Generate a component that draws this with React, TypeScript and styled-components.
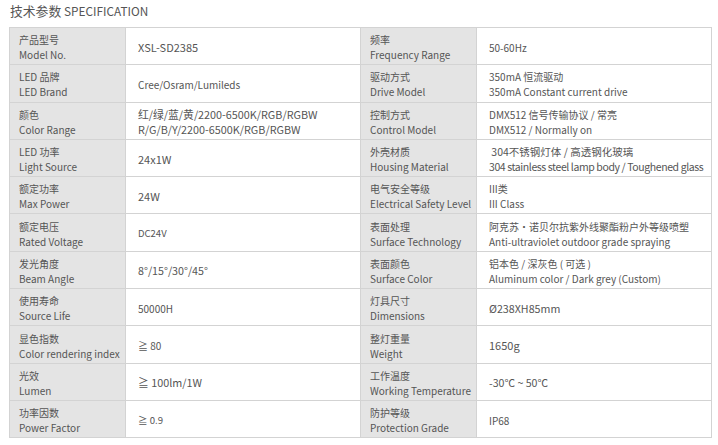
import React from "react";
import styled, { createGlobalStyle } from "styled-components";

type Spec = {
  zh: string;
  en: string;
  value: string[];
  size?: number;
};

const leftSpecs: Spec[] = [
  { zh: "产品型号", en: "Model No.", value: ["XSL-SD2385"], size: 11 },
  { zh: "LED 品牌", en: "LED Brand", value: ["Cree/Osram/Lumileds"] },
  {
    zh: "颜色",
    en: "Color Range",
    value: ["红/绿/蓝/黄/2200-6500K/RGB/RGBW", "R/G/B/Y/2200-6500K/RGB/RGBW"],
    size: 10.8,
  },
  { zh: "LED 功率", en: "Light Source", value: ["24x1W"], size: 11 },
  { zh: "额定功率", en: "Max Power", value: ["24W"], size: 11 },
  { zh: "额定电压", en: "Rated Voltage", value: ["DC24V"], size: 9.5 },
  { zh: "发光角度", en: "Beam Angle", value: ["8°/15°/30°/45°"], size: 10.7 },
  { zh: "使用寿命", en: "Source Life", value: ["50000H"] },
  { zh: "显色指数", en: "Color rendering index", value: ["≧ 80"] },
  { zh: "光效", en: "Lumen", value: ["≧ 100lm/1W"], size: 10.8 },
  { zh: "功率因数", en: "Power Factor", value: ["≧ 0.9"], size: 9.6 },
];

const rightSpecs: Spec[] = [
  { zh: "频率", en: "Frequency Range", value: ["50-60Hz"] },
  {
    zh: "驱动方式",
    en: "Drive Model",
    value: ["350mA 恒流驱动", "350mA Constant current drive"],
  },
  {
    zh: "控制方式",
    en: "Control Model",
    value: ["DMX512 信号传输协议 / 常亮", "DMX512 / Normally on"],
  },
  {
    zh: "外壳材质",
    en: "Housing Material",
    value: [" 304不锈钢灯体 / 高透钢化玻璃", "304 stainless steel lamp body / Toughened glass"],
    size: 10.5,
  },
  { zh: "电气安全等级", en: "Electrical Safety Level", value: ["III类", "III Class"] },
  {
    zh: "表面处理",
    en: "Surface Technology",
    value: ["阿克苏·诺贝尔抗紫外线聚酯粉户外等级喷塑", "Anti-ultraviolet outdoor grade spraying"],
  },
  {
    zh: "表面颜色",
    en: "Surface Color",
    value: ["铝本色 / 深灰色 ( 可选 )", "Aluminum color / Dark grey (Custom)"],
  },
  { zh: "灯具尺寸", en: "Dimensions", value: ["Ø238XH85mm"], size: 10.7 },
  { zh: "整灯重量", en: "Weight", value: ["1650g"], size: 11 },
  { zh: "工作温度", en: "Working Temperature", value: ["-30℃ ~ 50℃"], size: 10.6 },
  { zh: "防护等级", en: "Protection Grade", value: ["IP68"] },
];

const Values = ({ spec }: { spec: Spec }) => (
  <ValueCell size={spec.size}>
    {spec.value.map((v, j) => (
      <Line key={j} tight={v.length > 40}>
        {v}
      </Line>
    ))}
  </ValueCell>
);

const App = () => {
  return (
    <>
      <GlobalStyle />
      <Page>
        <Heading>
          技术参数 <HeadingEn>SPECIFICATION</HeadingEn>
        </Heading>
        <SpecTable>
          <colgroup>
            <col style={{ width: 116 }} />
            <col style={{ width: 235 }} />
            <col style={{ width: 116 }} />
            <col />
          </colgroup>
          <tbody>
            {leftSpecs.map((left, i) => {
              const right = rightSpecs[i];
              return (
                <tr key={i}>
                  <LabelCell>
                    {left.zh}
                    <br />
                    {left.en}
                  </LabelCell>
                  <Values spec={left} />
                  <LabelCell>
                    {right.zh}
                    <br />
                    {right.en}
                  </LabelCell>
                  <Values spec={right} />
                </tr>
              );
            })}
          </tbody>
        </SpecTable>
      </Page>
    </>
  );
};

export default App;

const GlobalStyle = createGlobalStyle`
  body {
    margin: 0;
    background: #ffffff;
    font-family: "Noto Sans CJK SC", "Noto Sans", sans-serif;
    color: #555555;
  }
`;

const Page = styled.div`
  padding: 0 6px 0 9px;
  width: 718px;
  box-sizing: border-box;
`;

const Heading = styled.div`
  font-size: 12.8px;
  line-height: 18px;
  padding: 2px 0 0 1px;
  height: 25px;
  color: #555;
`;

const HeadingEn = styled.span`
  font-size: 11.8px;
`;

const SpecTable = styled.table`
  width: 703px;
  border-collapse: collapse;
  table-layout: fixed;
  font-size: 10px;
  line-height: 15px;
`;

const LabelCell = styled.td`
  background: #e4e4e4;
  border: 1px solid #d3d3d3;
  padding: 2px 0 0 9px;
  height: 34.3px;
  vertical-align: middle;
  white-space: nowrap;
  color: #555;
`;

const ValueCell = styled.td<{ size?: number }>`
  background: #ffffff;
  border: 1px solid #d3d3d3;
  padding: 2px 0 0 12px;
  height: 34.3px;
  vertical-align: middle;
  white-space: nowrap;
  color: #555;
  font-size: ${(p) => (p.size ? `${p.size}px` : "10px")};
`;

const Line = styled.div<{ tight?: boolean }>`
  white-space: pre;
  letter-spacing: ${(p) => (p.tight ? "-0.4px" : "0")};
`;
